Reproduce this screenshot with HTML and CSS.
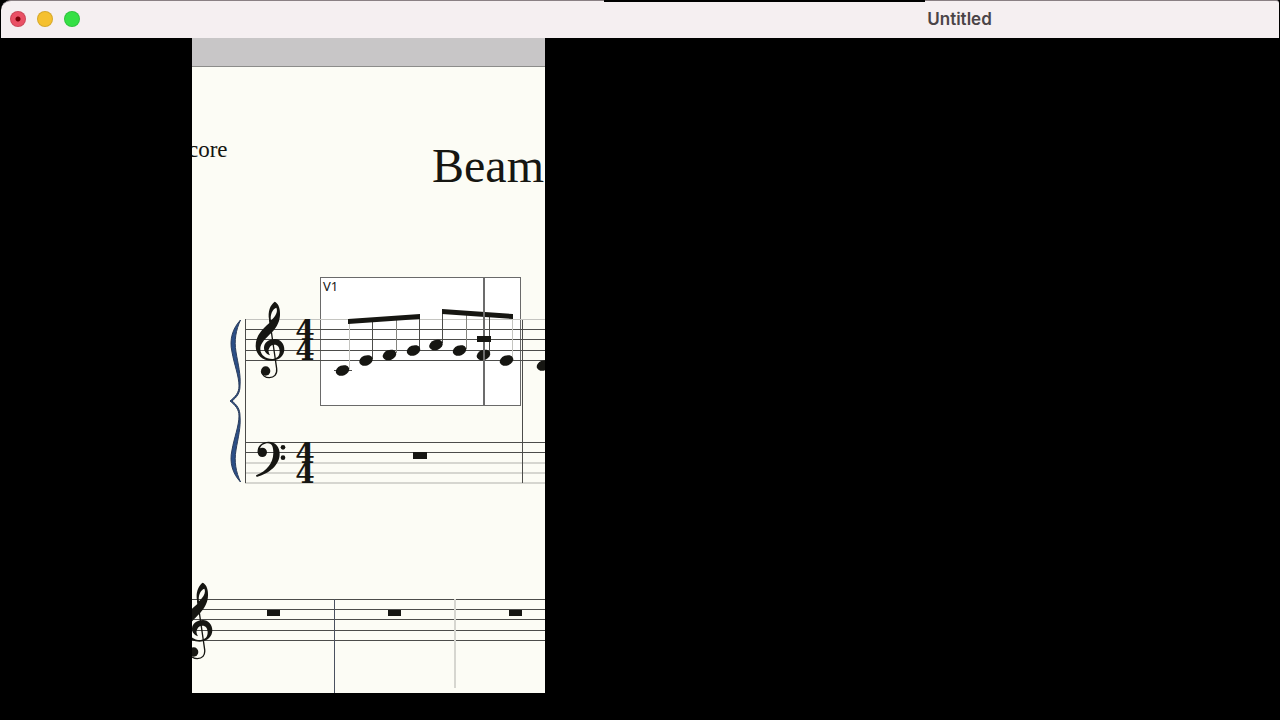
FILE: index.html
```html
<!DOCTYPE html>
<html lang="en">
	<head>
		<meta charset="utf-8">
		<title>Untitled</title>
		<link rel="stylesheet" href="styles.css">
	</head>
	<body>
		<header class="titlebar">
			<div class="controls">
				<button class="dot close" aria-label="Close"></button>
				<button class="dot minimize" aria-label="Minimize"></button>
				<button class="dot zoom" aria-label="Zoom"></button>
			</div>
			<h1 class="title">Untitled</h1>
			<div class="notch"></div>
		</header>
		<main class="desk">
			<section class="pane">
				<div class="ruler"></div>
				<svg class="paper" xmlns="http://www.w3.org/2000/svg">
					<defs>
						<!-- clefs are drawn at 3x -->
						<g id="treble">
							<path fill-rule="evenodd" d="M164 35C150 45 143 66 147 88L149 98C128 116 107 136 107 168C107 195 128 212 155 212C180 212 193 195 193 178C193 160 180 147 165 147C146 147 132 158 132 174C132 185 140 192 150 196C145 187 144 180 148 174C151 167 156 164 163 164C173 164 179 172 179 184C179 198 172 206 157 207C137 207 122 196 121 178C120 160 139 144 156 127C172 109 181 92 180 68C180 52 173 38 164 35ZM169 53C174 63 169 77 153 91C150 75 157 57 169 53Z"/>
							<path class="thin" d="M149 90L170 236C172 254 162 263 148 263C136 263 126 255 124 244"/>
							<circle cx="137" cy="243" r="14"/>
						</g>
						<ellipse id="note" rx="7" ry="5" transform="rotate(-22)"/>
					</defs>
					<g transform="translate(-192 -67)">
						<text class="part" x="188" y="157">core</text>
						<text class="heading" x="432" y="182">Beam</text>

						<!-- selected bar -->
						<rect class="frame" x="320.5" y="277.5" width="200" height="128"/>
						<text class="voice" x="323" y="291">V1</text>

						<!-- first system -->
						<g class="lines">
							<path class="faint" d="M245 319.5H546"/>
							<path d="M245 329.5H546M245 339.5H546M245 350.5H546M245 360.5H546"/>
							<path d="M245 442.5H546M245 452.5H546"/>
							<path class="faint wide" d="M245 463H546M245 473H546M245 483H546"/>
							<path d="M245.5 319V483M522.5 320V483"/>
							<path d="M334 370.5H352"/>
						</g>
						<path class="brace" d="M240.500 320C233 328 229 339 232 352C234 364 239 376 239 386C239 393 235 397 230 401C235 405 239 409 239 416C239 426 234 438 232 450C229 463 233 474 240.500 482C236 472 234 462 236 450C238 438 241 427 240 416C240 409 237 405 232 401C237 397 240 393 240 386C241 375 238 364 236 352C234 340 236 330 240.500 320Z"/>
						<g transform="translate(220 290) scale(.3333)">
							<use href="#treble"/>
						</g>
						<g transform="translate(220 390) scale(.3333)">
							<path d="M113 187C111 168 126 155 146 155C166 155 179 170 179 191C179 226 147 250 110 261L108 256C141 243 159 220 160 190C160 170 156 160 144 160C132 160 122 167 120 176Z"/>
							<circle cx="127" cy="187" r="14"/>
							<circle cx="189" cy="172" r="7"/>
							<circle cx="189" cy="203" r="7"/>
						</g>
						<g class="meter">
							<text x="305" y="340">4</text>
							<text x="305" y="360">4</text>
							<text x="305" y="463">4</text>
							<text x="305" y="483">4</text>
						</g>

						<g class="lines">
							<path class="faint" d="M349.5 322V369M512.5 318V359"/>
							<path class="mid" d="M396.5 320V353M466.5 314V349"/>
							<path d="M372.5 320V359M419.5 318V349M442.5 312V343M489.5 316V353"/>
						</g>
						<path d="M348 319L420 314V319L348 324ZM442 309L513 314V319L442 314Z"/>
						<use href="#note" transform="translate(342.5 370.5)"/>
						<use href="#note" transform="translate(366 360.5)"/>
						<use href="#note" transform="translate(389.5 355)"/>
						<use href="#note" transform="translate(413.5 350.5)"/>
						<use href="#note" transform="translate(436 345)"/>
						<use href="#note" transform="translate(459.5 350.5)"/>
						<use href="#note" transform="translate(483.5 355)"/>
						<use href="#note" transform="translate(506.5 360.5)"/>
						<use href="#note" transform="translate(543.5 365.5)"/>
						<path class="playhead" d="M484 277V406"/>
						<rect x="477" y="336" width="14" height="6"/>
						<rect x="413" y="452" width="14" height="7"/>

						<!-- second system -->
						<g class="lines">
							<path d="M192 599.5H546M192 609.5H546M192 619.5H546M192 630.5H546M192 640.5H546"/>
							<path class="blue" d="M334.5 599V693"/>
							<path class="faint wide" d="M455 599V688"/>
						</g>
						<g transform="translate(148 571) scale(.3333)">
							<use href="#treble"/>
						</g>
						<rect x="267" y="610" width="13" height="6"/>
						<rect x="388" y="610" width="13" height="6"/>
						<rect x="509" y="610" width="13" height="6"/>
					</g>
				</svg>
			</section>
		</main>
	</body>
</html>
```
FILE: styles.css
```css
* {
	box-sizing: border-box;
}

body {
	margin: 0;
	min-height: 100vh;
	display: flex;
	flex-direction: column;
	background-color: #000;
}

.titlebar {
	position: relative;
	display: grid;
	grid-template-columns: 1fr 1fr;
	align-items: center;
	height: 38px;
	margin: 0 1px;
	padding-bottom: 2px;
	background-color: #f5eff1;
	border-top: 1px solid #8a8084;
	border-radius: 10px 3px 0 0;
}

.controls {
	display: flex;
	gap: 11px;
	padding-left: 9px;
}

.dot {
	width: 16px;
	height: 16px;
	padding: 0;
	border: 1px solid rgba(0, 0, 0, .12);
	border-radius: 50%;
}

.close {
	background: radial-gradient(circle, #7c0008 2px, #ea5065 3px);
}

.minimize {
	background-color: #f5c02f;
}

.zoom {
	background-color: #35e045;
}

.title {
	margin: 0;
	text-align: center;
	font: 600 17px/24px Inter, "Liberation Sans", sans-serif;
	font-variation-settings: "opsz" 14;
	color: #4a4447;
}

/* dark strip over the top edge */
.notch {
	position: absolute;
	top: -1px;
	left: 47.2%;
	width: 25.1%;
	height: 2px;
	background-color: #000;
}

.desk {
	flex: 1;
	display: flex;
	padding: 0 0 27px 15%;
}

.pane {
	display: flex;
	flex-direction: column;
	width: 32.4%;
	overflow: hidden;
	background-color: #fcfcf5;
}

.ruler {
	height: 29px;
	background-color: #c8c6c7;
	border-bottom: 1px solid #8c8c8a;
}

.paper {
	flex: 1;
	width: 100%;
	min-height: 626px;
	fill: #161612;
}

.part {
	font: 23px "Liberation Serif", serif;
}

.heading {
	font: 48px "Liberation Serif", serif;
}

.voice {
	font: 13px "Noto Sans", sans-serif;
}

.meter {
	font: bold 28px "DejaVu Serif", serif;
	text-anchor: middle;
}

.frame {
	fill: #fff;
	stroke: #6a6a6a;
}

.lines {
	fill: none;
	stroke: #4c4c4a;
	shape-rendering: crispEdges;
}

.faint {
	stroke: #c4c4c0;
}

.mid {
	stroke: #85857f;
}

.blue {
	stroke: #4a5160;
}

.wide {
	stroke: #d6d6d0;
	stroke-width: 2px;
}

.thin {
	fill: none;
	stroke: #161612;
	stroke-width: 4px;
}

.brace {
	fill: #2c4f86;
	stroke: #2a3c5c;
	stroke-width: 1px;
}

.playhead {
	stroke: #6c6c6c;
	stroke-width: 2px;
}
```
